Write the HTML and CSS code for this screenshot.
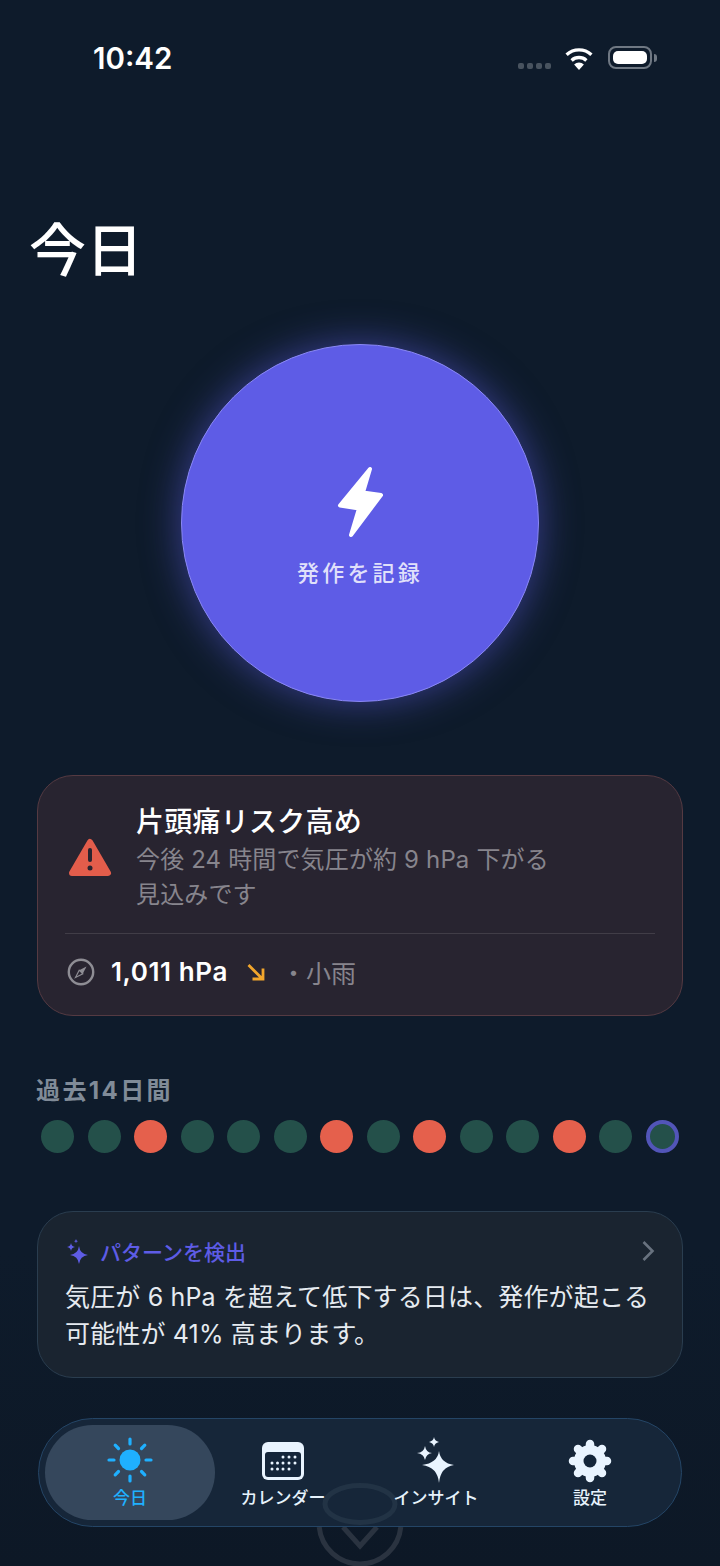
FILE: index.html
```html
<!DOCTYPE html>
<html lang="ja">
<head>
  <meta charset="UTF-8" />
  <title>今日</title>
  <link rel="stylesheet" href="styles.css">
</head>
<body>
  <div class="phone">
    <div class="status">
      <span class="time">10:42</span>
      <div class="status-icons">
        <div class="signal"><i></i><i></i><i></i><i></i></div>
        <svg class="wifi" viewBox="0 0 32 24" width="32" height="24">
          <path d="M16 24l-4.900-5.600a7.400 7.400 0 0 1 9.800 0z" fill="#fff"/>
          <path d="M8.600 14.400a11 11 0 0 1 14.800 0" fill="none" stroke="#fff" stroke-width="3.400"/>
          <path d="M3.600 8.700a18.400 18.400 0 0 1 24.800 0" fill="none" stroke="#fff" stroke-width="3.400"/>
        </svg>
        <div class="battery"><div class="battery-fill"></div></div>
        <div class="battery-tip"></div>
      </div>
    </div>

    <h1 class="title">今日</h1>

    <div class="record-wrap">
      <button class="record">
        <svg class="bolt" viewBox="0 0 50 74" width="50" height="74">
          <path d="M35 4L5 40.500L24 43.500L16 70L46 30L28 27.500Z" fill="#fff" stroke="#fff" stroke-width="4" stroke-linejoin="round"/>
        </svg>
        <span class="record-label">発作を記録</span>
      </button>
    </div>

    <section class="card risk">
      <div class="risk-top">
        <svg class="warn" viewBox="0 0 44 40" width="44" height="40">
          <path d="M22 4L40 35H4Z" fill="#e35d4b" stroke="#e35d4b" stroke-width="6" stroke-linejoin="round"/>
          <rect x="20" y="10" width="4" height="14" rx="2" fill="#29242f"/>
          <circle cx="22" cy="30" r="2.500" fill="#29242f"/>
        </svg>
        <div>
          <h2 class="risk-title">片頭痛リスク高め</h2>
          <p class="risk-text">今後 24 時間で気圧が約 9 hPa 下がる<br>見込みです</p>
        </div>
      </div>
      <div class="risk-bottom">
        <svg class="gauge" viewBox="0 0 28 28" width="28" height="28">
          <circle cx="14" cy="14" r="12.200" fill="none" stroke="#8e8d94" stroke-width="2.400"/>
          <path d="M19.500 8.500L15.800 15.800L12.200 12.200Z" fill="#8e8d94"/>
          <path d="M8.500 19.500L12.200 12.200L15.800 15.800Z" fill="none" stroke="#8e8d94" stroke-width="1.200"/>
        </svg>
        <span class="pressure">1,011 hPa</span>
        <svg class="arrow" viewBox="0 0 20 20" width="20" height="20">
          <path d="M2.500 3L16.500 17M17 6.500V17H6.500" fill="none" stroke="#f2a62c" stroke-width="2.800"/>
        </svg>
        <span class="weather">・小雨</span>
      </div>
    </section>

    <section class="history">
      <h3 class="history-title">過去14日間</h3>
      <div class="dots">
        <i class="dot"></i><i class="dot"></i><i class="dot bad"></i><i class="dot"></i><i class="dot"></i><i class="dot"></i><i class="dot bad"></i><i class="dot"></i><i class="dot bad"></i><i class="dot"></i><i class="dot"></i><i class="dot bad"></i><i class="dot"></i><i class="dot today"></i>
      </div>
    </section>

    <section class="card pattern">
      <div class="pattern-head">
        <svg viewBox="0 0 24 26" width="24" height="26">
          <path d="M14 8Q15 16 23 17Q15 18 14 26Q13 18 5 17Q13 16 14 8Z" fill="#5e5ce6"/>
          <path d="M6 5Q6.500 8.500 10 9Q6.500 9.500 6 13Q5.500 9.500 2 9Q5.500 8.500 6 5Z" fill="#5e5ce6"/>
          <path d="M11 1Q11.200 3 13 3.200Q11.200 3.400 11 5.200Q10.800 3.400 9 3.200Q10.800 3 11 1Z" fill="#5e5ce6"/>
        </svg>
        <span class="pattern-title">パターンを検出</span>
        <svg class="chevron" viewBox="0 0 14 22" width="14" height="22">
          <path d="M2.500 2L11.500 11L2.500 20" fill="none" stroke="#68727f" stroke-width="2.600"/>
        </svg>
      </div>
      <p class="pattern-text">気圧が 6 hPa を超えて低下する日は、発作が起こる<br>可能性が 41% 高まります。</p>
    </section>

    <svg class="ghost" viewBox="0 0 100 86" width="100" height="86">
      <path d="M9.200 47A41 41 0 0 0 90.800 47" fill="none" stroke="#2a3340" stroke-width="5"/>
      <path d="M33 47L50 66L67 47" fill="none" stroke="#2a3340" stroke-width="5"/>
    </svg>

    <nav class="tabs">
      <svg class="ghost-ring" viewBox="0 0 80 44" width="80" height="44">
        <ellipse cx="40" cy="22" rx="35" ry="18.500" fill="none" stroke="#223345" stroke-width="5"/>
      </svg>
      <div class="tab active">
        <svg viewBox="0 0 46 46" width="46" height="46">
          <circle cx="23" cy="23" r="10.500" fill="#1fb0ff"/>
          <path d="M23 2V7M23 39V44M2 23H7M39 23H44M8.200 8.200L11.500 11.500M34.500 34.500L37.800 37.800M8.200 37.800L11.500 34.500M34.500 11.500L37.800 8.200" stroke="#1fb0ff" stroke-width="3.200" stroke-linecap="round"/>
        </svg>
        <span>今日</span>
      </div>
      <div class="tab">
        <svg class="calendar" viewBox="0 0 42 38" width="42" height="38">
          <rect width="42" height="38" rx="6" fill="#e9f4ff"/>
          <rect x="3" y="10" width="36" height="25" rx="3" fill="#14253a"/>
          <g fill="#e9f4ff">
            <circle cx="21" cy="15" r="1.500"/><circle cx="27" cy="15" r="1.500"/><circle cx="33" cy="15" r="1.500"/>
            <circle cx="10" cy="21" r="1.500"/><circle cx="15.500" cy="21" r="1.500"/><circle cx="21" cy="21" r="1.500"/><circle cx="27" cy="21" r="1.500"/><circle cx="33" cy="21" r="1.500"/>
            <circle cx="10" cy="27" r="1.500"/><circle cx="15.500" cy="27" r="1.500"/><circle cx="21" cy="27" r="1.500"/><circle cx="27" cy="27" r="1.500"/>
          </g>
        </svg>
        <span>カレンダー</span>
      </div>
      <div class="tab">
        <svg viewBox="0 0 40 46" width="40" height="46">
          <path d="M23 14Q24.500 26 38 28Q24.500 30 23 46Q21.500 30 6 28Q21.500 26 23 14Z" fill="#e9f4ff"/>
          <path d="M9 9Q10 15.500 16 16Q10 17 9 23Q8 17 1 16Q8 15.500 9 9Z" fill="#e9f4ff"/>
          <path d="M18 0Q18.500 4 23 5Q18.500 6 18 10Q17.500 6 13 5Q17.500 4 18 0Z" fill="#e9f4ff"/>
        </svg>
        <span>インサイト</span>
      </div>
      <div class="tab">
        <svg viewBox="0 0 44 44" width="44" height="44">
          <circle cx="22" cy="22" r="11" fill="none" stroke="#e9f4ff" stroke-width="10"/>
          <path d="M22 5V39M5 22H39M10 10L34 34M34 10L10 34" stroke="#e9f4ff" stroke-width="8.500" stroke-linecap="round"/>
          <circle cx="22" cy="22" r="6.500" fill="#14253a"/>
        </svg>
        <span>設定</span>
      </div>
    </nav>
  </div>
</body>
</html>
```

FILE: styles.css
```css
* {
  box-sizing: border-box;
}
body {
  margin: 0;
  background: #0e1b2b;
  font-family: Inter, "Noto Sans CJK JP", sans-serif;
  color: #fff;
}
h1, h2, h3, p {
  margin: 0;
  font-weight: normal;
}
.phone {
  position: relative;
  width: 720px;
  height: 1566px;
  overflow: hidden;
  background: linear-gradient(#0e1b2b, #0e1b2b 80%, #0d1826);
}

/* status bar */
.status {
  display: flex;
  justify-content: space-between;
  align-items: center;
  height: 36px;
  margin-top: 40px;
  padding: 0 63px 0 93px;
}
.time {
  font-size: 29.500px;
  font-weight: 600;
}
.status-icons {
  display: flex;
  align-items: center;
  margin-top: -1px;
}
.signal {
  display: flex;
  gap: 3px;
  margin: 16px 12px 0 0;
}
.signal i {
  width: 6px;
  height: 6px;
  border-radius: 2px;
  background: #48535f;
}
.wifi {
  margin-right: 13px;
}
.battery {
  width: 44px;
  height: 23px;
  padding: 3px;
  border: 2px solid #6f7883;
  border-radius: 8px;
}
.battery-fill {
  height: 100%;
  border-radius: 5px;
  background: #fff;
}
.battery-tip {
  width: 3px;
  height: 8px;
  margin-left: 2px;
  border-radius: 0 3px 3px 0;
  background: #6f7883;
}

.title {
  margin: 132px 0 0 29px;
  font-size: 57px;
  font-weight: 500;
  line-height: 86px;
}

/* big button */
.record-wrap {
  display: flex;
  justify-content: center;
  margin-top: 50px;
}
.record {
  display: flex;
  flex-direction: column;
  align-items: center;
  width: 358px;
  height: 358px;
  padding: 120px 0 0;
  border: 1.500px solid #8a88f5;
  border-radius: 50%;
  background: #5e5ce6;
  box-shadow: 0 0 38px rgba(94, 92, 230, 0.55);
  font-family: inherit;
  color: rgba(255, 255, 255, 0.82);
}
.record-label {
  margin-top: 18px;
  font-size: 22px;
  font-weight: 500;
  line-height: 32px;
  letter-spacing: 3.200px;
}

.card {
  margin: 0 37px;
  border-radius: 36px;
}

/* risk card */
.risk {
  height: 241px;
  margin-top: 73px;
  padding: 29px 27px 0;
  border: 1.500px solid #553a42;
  background: #282430;
}
.risk-top {
  display: flex;
  align-items: center;
  gap: 24px;
  height: 129px;
  padding-left: 3px;
  padding-bottom: 22px;
  border-bottom: 1.500px solid #413d47;
}
.risk-title {
  font-size: 28px;
  font-weight: 500;
  line-height: 34px;
  letter-spacing: 0.250px;
}
.risk-text {
  margin-top: 3px;
  font-size: 24px;
  line-height: 35px;
  letter-spacing: 0.150px;
  color: #87858d;
}
.risk-bottom {
  display: flex;
  align-items: center;
  height: 75px;
  padding-left: 2px;
}
.gauge {
  margin-right: 16px;
}
.pressure {
  font-size: 26px;
  font-weight: 600;
  letter-spacing: 0.600px;
}
.arrow {
  margin: 0 15px 0 18px;
}
.weather {
  font-size: 25px;
  color: #87858d;
}

/* last 14 days */
.history {
  margin: 57px 41px 0;
}
.history-title {
  margin-left: -5px;
  font-size: 24px;
  font-weight: 700;
  line-height: 36px;
  letter-spacing: 2.400px;
  color: #808b98;
}
.dots {
  display: flex;
  justify-content: space-between;
  margin-top: 11px;
}
.dot {
  width: 33px;
  height: 33px;
  border-radius: 50%;
  background: #24504a;
}
.dot.bad {
  background: #e5604c;
}
.dot.today {
  border: 4px solid #5255b8;
}

/* pattern card */
.pattern {
  height: 167px;
  margin-top: 58px;
  padding: 24px 27px 0;
  border: 1.500px solid #2a3d4f;
  background: #1a2430;
}
.pattern-head {
  display: flex;
  align-items: center;
  gap: 11px;
  height: 30px;
}
.pattern-title {
  flex: 1;
  font-size: 21px;
  font-weight: 500;
  color: #5e5ce6;
}
.pattern-text {
  margin-top: 13px;
  font-size: 25px;
  line-height: 37px;
  letter-spacing: 0.150px;
  color: #e6ebf0;
}

/* tab bar */
.ghost {
  position: absolute;
  left: 310px;
  top: 1480px;
}
.tabs {
  position: absolute;
  left: 38px;
  top: 1418px;
  display: grid;
  grid-template-columns: 170px 136px 170px 138px;
  width: 644px;
  height: 109px;
  padding: 6px;
  border: 1.500px solid #244566;
  border-radius: 55px;
  background: #162639;
}
.ghost-ring {
  position: absolute;
  left: 281px;
  top: 63px;
}
.tab {
  position: relative;
  display: flex;
  flex-direction: column;
  align-items: center;
  justify-content: flex-end;
  padding-bottom: 10px;
  font-size: 17px;
  font-weight: 500;
  line-height: 24px;
  color: #e6f2fc;
}
.tab svg {
  margin-bottom: 3px;
}
.tab .calendar {
  margin-bottom: 6px;
}
.tab.active {
  border-radius: 48px;
  background: #35475c;
  color: #1fb0ff;
}
```
